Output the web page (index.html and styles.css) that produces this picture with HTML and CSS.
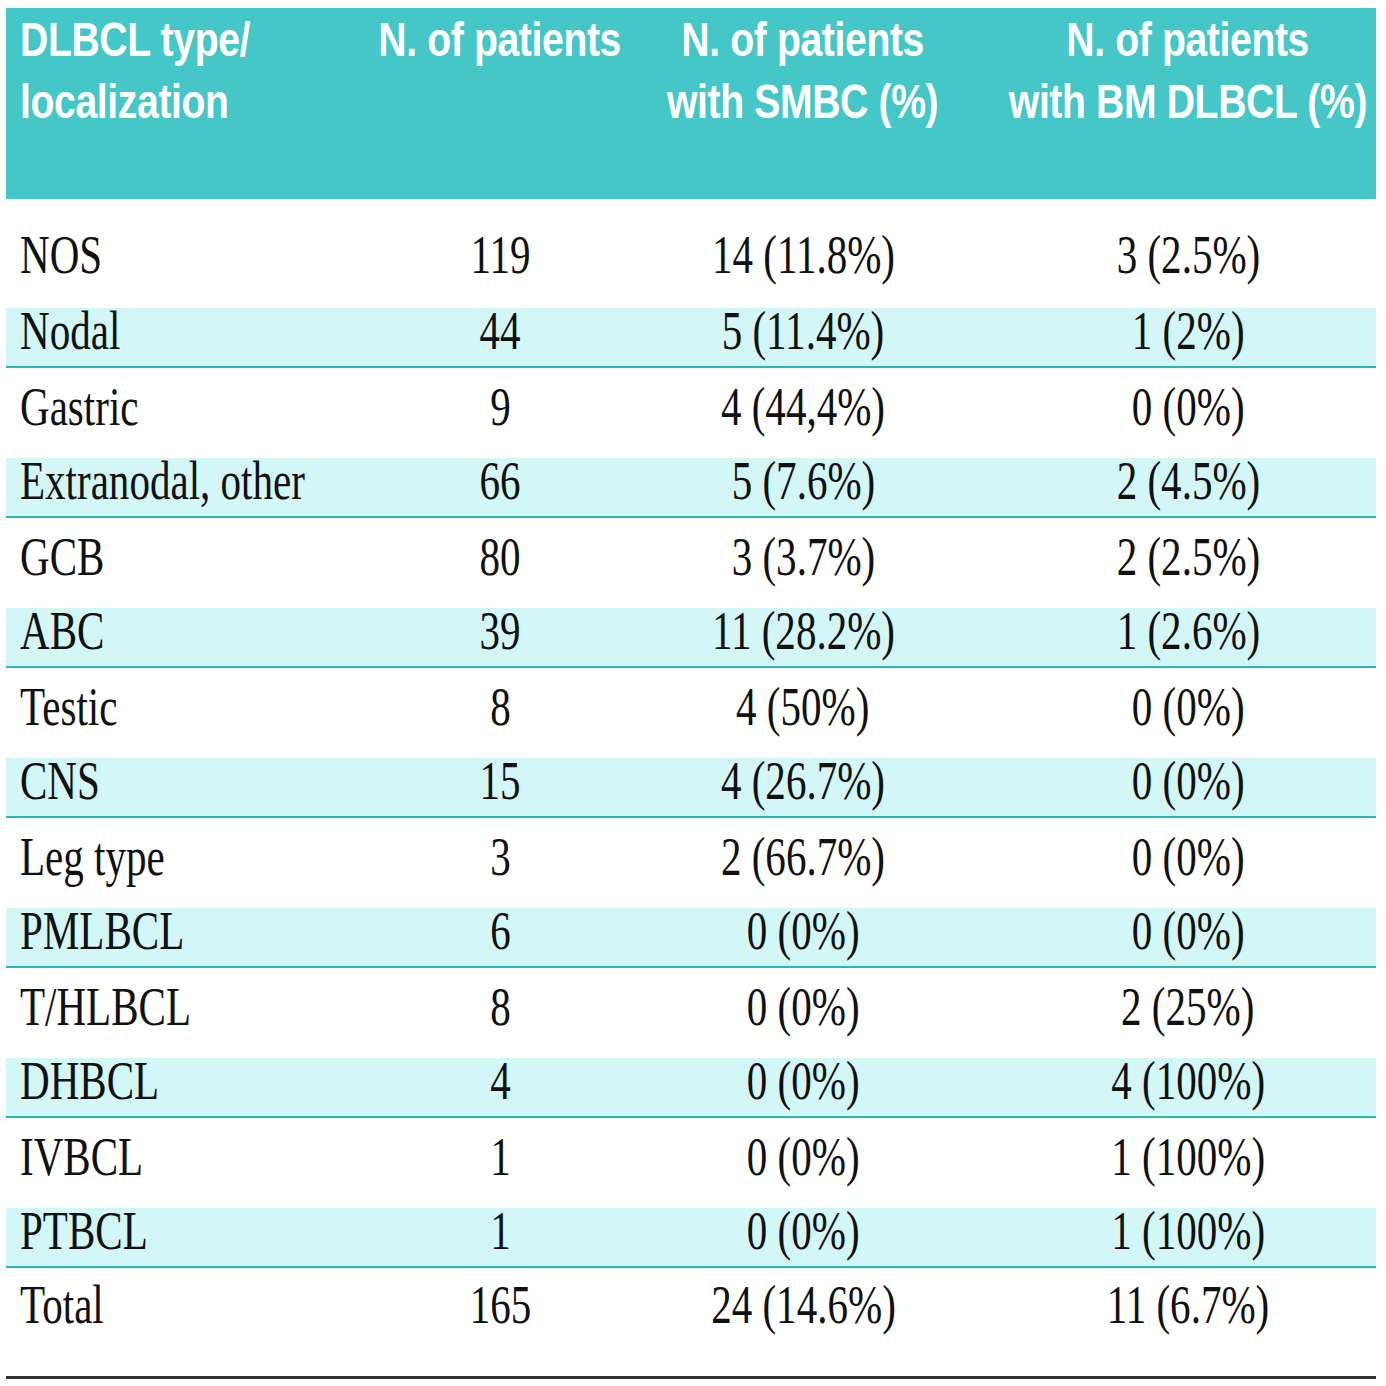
FILE: index.html
```html
<!DOCTYPE html>
<html>
<head>
<meta charset="utf-8">
<link rel="stylesheet" href="styles.css">
</head>
<body>
<table class="tbl">
  <colgroup>
    <col class="c1"><col class="c2"><col class="c3"><col class="c4">
  </colgroup>
  <thead>
    <tr>
      <th class="first"><div class="hw"><span class="h">DLBCL type/</span><span class="h">localization</span></div></th>
      <th><div class="hw"><span class="h">N. of patients</span></div></th>
      <th><div class="hw"><span class="h">N. of patients</span><span class="h">with SMBC (%)</span></div></th>
      <th class="last"><div class="hw"><span class="h">N. of patients</span><span class="h">with BM DLBCL (%)</span></div></th>
    </tr>
  </thead>
  <tbody>
    <tr class="r-first"><td class="first"><span class="t">NOS</span></td><td><span class="t">119</span></td><td><span class="t">14 (11.8%)</span></td><td class="last"><span class="t">3 (2.5%)</span></td></tr>
    <tr class="r-shade"><td class="first"><span class="t">Nodal</span></td><td><span class="t">44</span></td><td><span class="t">5 (11.4%)</span></td><td class="last"><span class="t">1 (2%)</span></td></tr>
    <tr class="r-plain"><td class="first"><span class="t">Gastric</span></td><td><span class="t">9</span></td><td><span class="t">4 (44,4%)</span></td><td class="last"><span class="t">0 (0%)</span></td></tr>
    <tr class="r-shade"><td class="first"><span class="t">Extranodal, other</span></td><td><span class="t">66</span></td><td><span class="t">5 (7.6%)</span></td><td class="last"><span class="t">2 (4.5%)</span></td></tr>
    <tr class="r-plain"><td class="first"><span class="t">GCB</span></td><td><span class="t">80</span></td><td><span class="t">3 (3.7%)</span></td><td class="last"><span class="t">2 (2.5%)</span></td></tr>
    <tr class="r-shade"><td class="first"><span class="t">ABC</span></td><td><span class="t">39</span></td><td><span class="t">11 (28.2%)</span></td><td class="last"><span class="t">1 (2.6%)</span></td></tr>
    <tr class="r-plain"><td class="first"><span class="t">Testic</span></td><td><span class="t">8</span></td><td><span class="t">4 (50%)</span></td><td class="last"><span class="t">0 (0%)</span></td></tr>
    <tr class="r-shade"><td class="first"><span class="t">CNS</span></td><td><span class="t">15</span></td><td><span class="t">4 (26.7%)</span></td><td class="last"><span class="t">0 (0%)</span></td></tr>
    <tr class="r-plain"><td class="first"><span class="t">Leg type</span></td><td><span class="t">3</span></td><td><span class="t">2 (66.7%)</span></td><td class="last"><span class="t">0 (0%)</span></td></tr>
    <tr class="r-shade"><td class="first"><span class="t">PMLBCL</span></td><td><span class="t">6</span></td><td><span class="t">0 (0%)</span></td><td class="last"><span class="t">0 (0%)</span></td></tr>
    <tr class="r-plain"><td class="first"><span class="t">T/HLBCL</span></td><td><span class="t">8</span></td><td><span class="t">0 (0%)</span></td><td class="last"><span class="t">2 (25%)</span></td></tr>
    <tr class="r-shade"><td class="first"><span class="t">DHBCL</span></td><td><span class="t">4</span></td><td><span class="t">0 (0%)</span></td><td class="last"><span class="t">4 (100%)</span></td></tr>
    <tr class="r-plain"><td class="first"><span class="t">IVBCL</span></td><td><span class="t">1</span></td><td><span class="t">0 (0%)</span></td><td class="last"><span class="t">1 (100%)</span></td></tr>
    <tr class="r-shade"><td class="first"><span class="t">PTBCL</span></td><td><span class="t">1</span></td><td><span class="t">0 (0%)</span></td><td class="last"><span class="t">1 (100%)</span></td></tr>
    <tr class="r-total"><td class="first"><span class="t">Total</span></td><td><span class="t">165</span></td><td><span class="t">24 (14.6%)</span></td><td class="last"><span class="t">11 (6.7%)</span></td></tr>
  </tbody>
</table>
</body>
</html>
```

FILE: styles.css
```css
html, body {
  background: #ffffff;
}
body {
  margin: 8px 10px 0 6px;
}
.tbl {
  width: 1370px;
  border-collapse: collapse;
  table-layout: fixed;
}
.c1 { width: 369px; }
.c2 { width: 250px; }
.c3 { width: 356px; }
.c4 { width: 395px; }

.tbl th {
  background: #45c7c7;
  color: #ffffff;
  font-family: "Liberation Sans", Arial, sans-serif;
  font-weight: bold;
  font-size: 49px;
  line-height: 62px;
  height: 191px;
  padding: 0;
  vertical-align: top;
  white-space: nowrap;
}
.tbl th.first {
  padding-left: 14px;
}
.tbl th.last,
.tbl td.last {
  padding-left: 19px;
}
.hw {
  display: flex;
  flex-direction: column;
  align-items: center;
}
.first .hw {
  align-items: flex-start;
}
.h {
  display: block;
  flex: none;
  letter-spacing: -0.5px;
  transform: scaleX(0.8);
  transform-origin: center top;
}
.first .h {
  transform-origin: left top;
}

.tbl td {
  font-family: "Liberation Serif", "Times New Roman", serif;
  font-size: 54px;
  line-height: 44px;
  color: #111111;
  text-align: center;
  white-space: nowrap;
  padding: 0;
  vertical-align: top;
}
.tbl td.first {
  text-align: left;
  padding-left: 14px;
}
.t {
  display: inline-block;
  transform: scaleX(0.76);
  transform-origin: center;
}
.first .t {
  transform-origin: left center;
}

.r-first td {
  padding-top: 34px;
  padding-bottom: 31px;
}
.r-shade td {
  background: #d3f6f6;
  padding-top: 1px;
  padding-bottom: 13px;
  border-bottom: 2px solid #2ab6b6;
}
.r-plain td {
  padding-top: 17px;
  padding-bottom: 29px;
}
.r-total td {
  padding-top: 15px;
  padding-bottom: 49px;
  border-bottom: 3px solid #333333;
}
```
